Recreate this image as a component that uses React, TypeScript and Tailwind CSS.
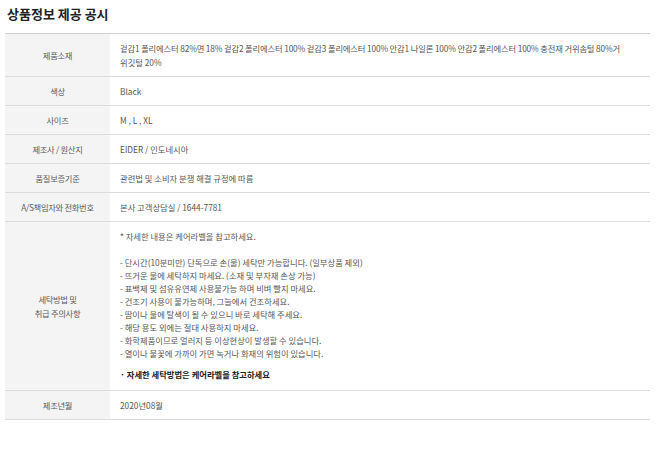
const rows: { label: React.ReactNode; value: React.ReactNode }[] = [
  {
    label: '제품소재',
    value: (
      <>
        <span className="whitespace-nowrap tracking-[-0.15px]">
          겉감1 폴리에스터 82%면 18% 겉감2 폴리에스터 100% 겉감3 폴리에스터 100% 안감1 나일론 100% 안감2 폴리에스터 100% 충전재 거위솜털 80%거
        </span>
        <br />
        위깃털 20%
      </>
    ),
  },
  { label: '색상', value: 'Black' },
  { label: '사이즈', value: 'M , L , XL' },
  { label: '제조사 / 원산지', value: 'EIDER / 인도네시아' },
  { label: '품질보증기준', value: '관련법 및 소비자 분쟁 해결 규정에 따름' },
  { label: 'A/S책임자와 전화번호', value: '본사 고객상담실 / 1644-7781' },
];

const careList = [
  '- 단시간(10분미만) 단독으로 손(물) 세탁만 가능합니다. (일부상품 제외)',
  '- 뜨거운 물에 세탁하지 마세요. (소재 및 부자재 손상 가능)',
  '- 표백제 및 섬유유연제 사용불가능 하며 비벼 빨지 마세요.',
  '- 건조기 사용이 불가능하며, 그늘에서 건조하세요.',
  '- 땀이나 물에 탈색이 될 수 있으니 바로 세탁해 주세요.',
  '- 해당 용도 외에는 절대 사용하지 마세요.',
  '- 화학제품이므로 얼러지 등 이상현상이 발생할 수 있습니다.',
  '- 열이나 불꽃에 가까이 가면 녹거나 화재의 위험이 있습니다.',
];

function Row({ label, children }: { label: React.ReactNode; children: React.ReactNode }) {
  return (
    <div className="grid grid-cols-[105px_1fr] border-b border-[#dcdcdc]">
      <div className="bg-[#f4f4f4] flex items-center justify-center text-center px-1 tracking-[-0.3px] text-[#5a5a5a]">
        {label}
      </div>
      <div className="pl-[10px] pr-2 py-[7px] text-[#555]">{children}</div>
    </div>
  );
}

export default function App() {
  return (
    <div
      className="w-[663px] h-[462px] bg-white pl-[5px] pt-[5px] text-[8.3px] leading-[14px]"
      style={{ fontFamily: '"Noto Sans CJK KR", "Noto Sans", sans-serif' }}
    >
      <h2 className="text-[13px] leading-[18px] font-bold text-[#222] pl-[2px] mb-[10px]">상품정보 제공 공시</h2>

      <div className="w-[645px] border-t border-[#cfcfcf]">
        {rows.map((r, i) => (
          <Row key={i} label={r.label}>
            {r.value}
          </Row>
        ))}

        <Row
          label={
            <>
              세탁방법 및
              <br />
              취급 주의사항
            </>
          }
        >
          <div className="leading-[13px] pt-[1px] pb-[2px]">
            <p>* 자세한 내용은 케어라벨을 참고하세요.</p>
            <p className="h-[13px]" />
            {careList.map((t, i) => (
              <p key={i}>{t}</p>
            ))}
            <p className="mt-[8px] font-bold text-[#222]">· 자세한 세탁방법은 케어라벨을 참고하세요</p>
          </div>
        </Row>

        <Row label="제조년월">2020년08월</Row>
      </div>
    </div>
  );
}
